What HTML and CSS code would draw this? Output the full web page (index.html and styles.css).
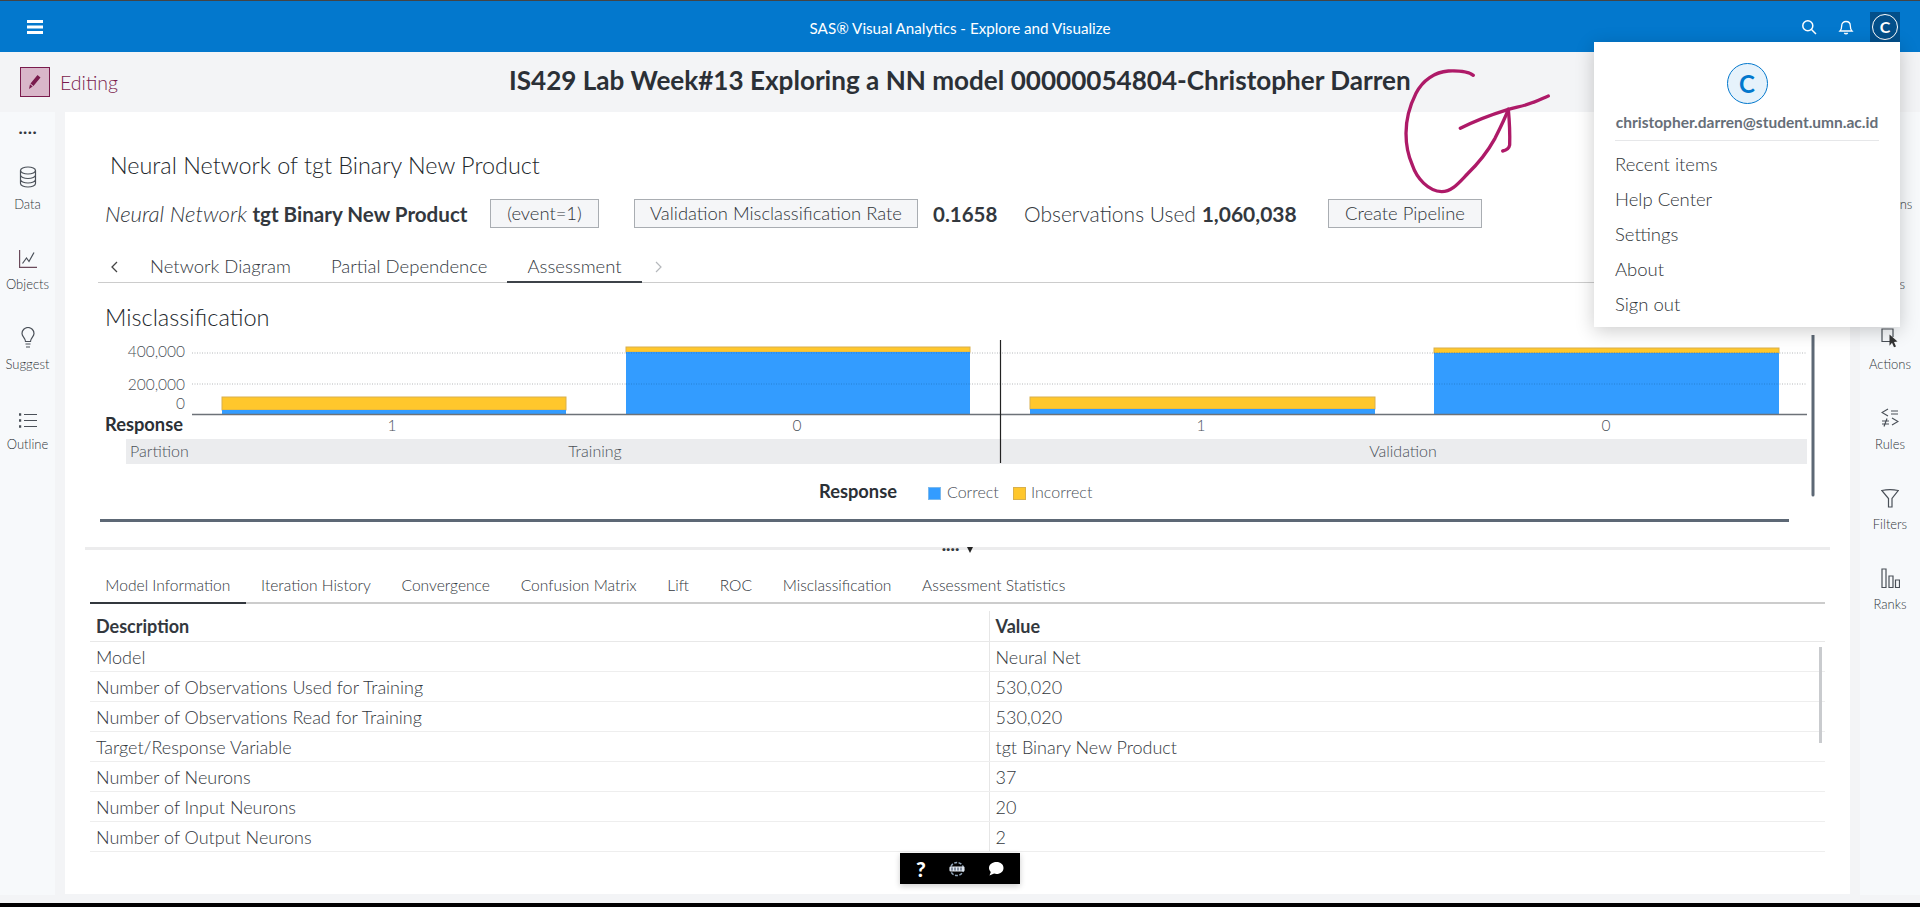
FILE: index.html
```html
<!DOCTYPE html>
<html lang="en">
<head>
<meta charset="utf-8">
<title>SAS Visual Analytics</title>
<link rel="stylesheet" href="styles.css">
</head>
<body>
<header class="topbar">
  <svg class="hamburger" width="16" height="14" viewBox="0 0 16 14"><path d="M0 0h16v3H0zM0 5.500h16v3H0zM0 11h16v3H0z" fill="#fff"/></svg>
  <div class="app-name">SAS® Visual Analytics - Explore and Visualize</div>
  <div class="top-actions">
    <svg class="top-icon" width="16" height="16" viewBox="0 0 16 16" fill="none" stroke="#fff" stroke-width="1.500"><circle cx="6.800" cy="6.800" r="5"/><path d="M10.500 10.500L15 15"/></svg>
    <svg class="top-icon" width="16" height="16" viewBox="0 0 16 16" fill="none" stroke="#fff" stroke-width="1.300"><path d="M2 12c1.500-1.500 1.700-3 1.700-5.200C3.700 4.300 5.500 2.500 8 2.500s4.300 1.800 4.300 4.300c0 2.200.2 3.700 1.700 5.200z"/><path d="M6.200 14.200c1.100.8 2.500.8 3.600 0" stroke-width="1.500"/></svg>
    <div class="user-btn"><span class="user-ring">C</span></div>
  </div>
</header>

<section class="subbar">
  <div class="edit-box">
    <svg width="14" height="16" viewBox="0 0 14 16"><path d="M9.500 1l3 2.400-7 8.500-3-2.400zM2 10.300l2.700 2.100L1 15z" fill="#7a1b4d"/></svg>
  </div>
  <span class="edit-label">Editing</span>
  <h1 class="doc-title">IS429 Lab Week#13 Exploring a NN model 00000054804-Christopher Darren</h1>
</section>

<div class="workspace">
  <nav class="rail">
    <div class="rail-dots">····</div>
    <div class="rail-item">
      <svg class="rail-icon" width="18" height="22" viewBox="0 0 18 22" fill="none" stroke="#4a5058" stroke-width="1.200"><ellipse cx="9" cy="4.500" rx="7.500" ry="3.500"/><path d="M1.500 4.500v13c0 1.900 3.400 3.500 7.500 3.500s7.500-1.600 7.500-3.500v-13M1.500 9c0 1.900 3.400 3.500 7.500 3.500s7.500-1.600 7.500-3.500M1.500 13.500c0 1.900 3.400 3.500 7.500 3.500s7.500-1.600 7.500-3.500"/></svg>
      <span>Data</span>
    </div>
    <div class="rail-item">
      <svg class="rail-icon" width="18" height="18" viewBox="0 0 18 18" fill="none" stroke="#4a5058" stroke-width="1.200"><path d="M.6 0v17.400H18" stroke="#6a4a5a"/><path d="M3.500 13.500l4-5.500 2.500 3.500L15 2.500"/></svg>
      <span>Objects</span>
    </div>
    <div class="rail-item">
      <svg class="rail-icon" width="14" height="21" viewBox="0 0 14 21" fill="none" stroke="#4a5058" stroke-width="1.200"><path d="M4.500 14.500C4.500 11 1 9.800 1 6.500a6 6 0 0112 0c0 3.300-3.500 4.500-3.500 8z"/><path d="M4.500 17h5M5 20h4"/></svg>
      <span>Suggest</span>
    </div>
    <div class="rail-item">
      <svg class="rail-icon" width="18" height="15" viewBox="0 0 18 15" fill="none" stroke="#4a5058" stroke-width="1.200"><path d="M5 1.500h13M5 7.500h13M5 13.500h13"/><path d="M0 1.500h2.200M0 7.500h2.200M0 13.500h2.200" stroke-width="2.400"/></svg>
      <span>Outline</span>
    </div>
  </nav>

  <main class="canvas">
    <h2 class="model-title">Neural Network of tgt Binary New Product</h2>
    <div class="summary">
      <span class="summary-name"><i>Neural Network</i> <b>tgt Binary New Product</b></span>
      <span class="chip chip-event">(event=1)</span>
      <span class="chip chip-metric">Validation Misclassification Rate</span>
      <b class="summary-value">0.1658</b>
      <span class="summary-obs">Observations Used <b>1,060,038</b></span>
      <span class="chip chip-pipeline">Create Pipeline</span>
    </div>
    <div class="tabs">
      <svg class="tab-chevron" width="8" height="12" viewBox="0 0 8 12" fill="none" stroke="#444" stroke-width="1.300"><path d="M7 1L2 6l5 5"/></svg>
      <span class="tab">Network Diagram</span>
      <span class="tab">Partial Dependence</span>
      <span class="tab tab-active">Assessment</span>
      <svg class="tab-chevron-next" width="8" height="12" viewBox="0 0 8 12" fill="none" stroke="#b5b8bc" stroke-width="1.200"><path d="M1 1l5 5-5 5"/></svg>
    </div>
    <h3 class="chart-title">Misclassification</h3>
    <svg class="chart" width="1716" height="190" viewBox="0 0 1716 190">
      <rect x="26" y="104" width="1681" height="25" fill="#ebecee"/>
      <g stroke="#b5b8bb" stroke-dasharray="1 1.500"><path d="M92 18H1707M92 49H1707"/></g>
      <rect x="122" y="62" width="344" height="13" fill="#ffc72c" stroke="#d9b04c"/>
      <rect x="122" y="75" width="344" height="4" fill="#339cff"/>
      <rect x="526" y="12" width="344" height="5" fill="#ffc72c" stroke="#d9b04c"/>
      <rect x="526" y="17" width="344" height="62" fill="#339cff"/>
      <rect x="930" y="62" width="345" height="12" fill="#ffc72c" stroke="#d9b04c"/>
      <rect x="930" y="74" width="345" height="5" fill="#339cff"/>
      <rect x="1334" y="13" width="345" height="5" fill="#ffc72c" stroke="#d9b04c"/>
      <rect x="1334" y="18" width="345" height="61" fill="#339cff"/>
      <g stroke="#1f6fb8" stroke-dasharray="1 1.500" opacity=".6"><path d="M526 18H870M526 49H870M1334 18H1679M1334 49H1679"/></g>
      <path d="M92 79.500H1707" stroke="#6d7278" stroke-width="1.500"/>
      <path d="M900.500 5V128" stroke="#222" stroke-width="1.200"/>
      <g class="tick" text-anchor="end"><text x="85" y="22">400,000</text><text x="85" y="55">200,000</text><text x="85" y="74">0</text></g>
      <text class="resp" x="5" y="96">Response</text>
      <g class="tick" text-anchor="middle"><text x="292" y="96">1</text><text x="697" y="96">0</text><text x="1101" y="96">1</text><text x="1506" y="96">0</text></g>
      <text class="band" x="30" y="122">Partition</text>
      <text class="band" x="495" y="122" text-anchor="middle">Training</text>
      <text class="band" x="1303" y="122" text-anchor="middle">Validation</text>
      <text class="resp" x="719" y="163">Response</text>
      <rect x="828.500" y="152.500" width="12" height="12" fill="#339cff" stroke="#7ab9ee"/>
      <text class="band" x="847" y="163">Correct</text>
      <rect x="913.500" y="152.500" width="12" height="12" fill="#ffc72c" stroke="#d9b04c"/>
      <text class="band" x="931" y="163">Incorrect</text>
      <path d="M0 185.500H1689" stroke="#5d6875" stroke-width="3"/>
      <path d="M1713 0V160" stroke="#5d6875" stroke-width="3" stroke-linecap="round"/>
    </svg>
    <div class="splitter">
      <span class="split-dots">····</span>
      <svg width="6" height="6" viewBox="0 0 6 6"><path d="M0 0h6L3 6z" fill="#222"/></svg>
    </div>
    <div class="subtabs">
      <span class="subtab subtab-active">Model Information</span>
      <span class="subtab">Iteration History</span>
      <span class="subtab">Convergence</span>
      <span class="subtab">Confusion Matrix</span>
      <span class="subtab">Lift</span>
      <span class="subtab">ROC</span>
      <span class="subtab">Misclassification</span>
      <span class="subtab">Assessment Statistics</span>
    </div>
    <table class="info">
      <thead><tr><th>Description</th><th>Value</th></tr></thead>
      <tbody>
        <tr><td>Model</td><td>Neural Net</td></tr>
        <tr><td>Number of Observations Used for Training</td><td>530,020</td></tr>
        <tr><td>Number of Observations Read for Training</td><td>530,020</td></tr>
        <tr><td>Target/Response Variable</td><td>tgt Binary New Product</td></tr>
        <tr><td>Number of Neurons</td><td>37</td></tr>
        <tr><td>Number of Input Neurons</td><td>20</td></tr>
        <tr><td>Number of Output Neurons</td><td>2</td></tr>
      </tbody>
    </table>
  </main>

  <nav class="rail rail-right">
    <div class="rail-item"><svg class="rail-icon" width="18" height="18" viewBox="0 0 18 18" fill="none" stroke="#4a5058" stroke-width="1.200"><path d="M2 3h14v9H2z"/></svg><span>Options</span></div>
    <div class="rail-item"><svg class="rail-icon" width="18" height="18" viewBox="0 0 18 18" fill="none" stroke="#4a5058" stroke-width="1.200"><path d="M2 3h14v12H2z"/></svg><span>Roles</span></div>
    <div class="rail-item">
      <svg class="rail-icon" width="18" height="20" viewBox="0 0 18 20"><path d="M10 13.500H1V1h11v8" fill="none" stroke="#4a5058" stroke-width="1.200"/><path d="M8.500 6.500l8 7-3.500.5 2 4.500-2 .8-2-4.500-2.500 3z" fill="#333"/></svg>
      <span>Actions</span>
    </div>
    <div class="rail-item">
      <svg class="rail-icon" width="18" height="20" viewBox="0 0 18 20" fill="none" stroke="#4a5058" stroke-width="1.200"><path d="M7 1L1 4.500 7 8M10 3h7M10 6h7M1 13h7M1 16h7M6 10.500l-3 8M11 10l6 3.500-6 3.500"/></svg>
      <span>Rules</span>
    </div>
    <div class="rail-item">
      <svg class="rail-icon" width="18" height="19" viewBox="0 0 18 19" fill="none" stroke="#4a5058" stroke-width="1.200"><path d="M.8 1.500C5 .7 13 .7 17.200 1.500L11 9.500V18H7.500V9.500z"/></svg>
      <span>Filters</span>
    </div>
    <div class="rail-item">
      <svg class="rail-icon" width="19" height="20" viewBox="0 0 19 20" fill="none" stroke="#4a5058" stroke-width="1.200"><path d="M1 1h4v18.500H1zM8 8h4v11.500H8zM14.500 12h4v7.500h-4z"/></svg>
      <span>Ranks</span>
    </div>
  </nav>
</div>
<div class="screen-edge"></div>

<aside class="user-menu">
  <div class="menu-avatar">C</div>
  <div class="menu-email">christopher.darren@student.umn.ac.id</div>
  <ul class="menu-list">
    <li>Recent items</li>
    <li>Help Center</li>
    <li>Settings</li>
    <li>About</li>
    <li>Sign out</li>
  </ul>
</aside>

<div class="scroll-thumb"></div>

<div class="float-bar">
  <span class="float-q">?</span>
  <svg width="18" height="18" viewBox="0 0 18 18"><circle cx="9" cy="9" r="6.500" fill="none" stroke="#8fa3b8" stroke-width="1.500" stroke-dasharray="3 1.500"/><rect x="1.500" y="6.500" width="15" height="5" rx="1" fill="#dfe6ee"/><path d="M4 7.500v3M7 7.500v3M10 7.500v3M13 7.500v3" stroke="#2a3a55"/></svg>
  <svg width="16" height="16" viewBox="0 0 16 16"><path d="M8.500 1C12.600 1 15.500 3.500 15.500 7s-3 6-7 6c-.9 0-1.700-.1-2.400-.4L1.500 14.500l1.300-3.500C1.600 9.800 1 8.500 1 7c0-3.500 3.400-6 7.500-6z" fill="#fff"/></svg>
</div>

<svg class="ink" width="240" height="160" viewBox="0 0 720 480" fill="none" stroke="#ae1a68" stroke-width="10" stroke-linecap="round" stroke-linejoin="round">
  <path d="M280 76C262 62 235 62 205 63C165 66 128 90 108 130C88 170 78 215 78 250C78 290 88 325 97 345C110 385 145 423 185 425C215 425 235 400 262 372C295 340 320 310 345 265C360 235 375 205 385 178"/>
  <path d="M385 178C388 210 390 250 389 285C387 296 378 301 368 303"/>
  <path d="M241 235C285 212 340 192 385 178C415 170 440 166 460 157C480 150 492 143 505 138"/>
</svg>
</body>
</html>
```
FILE: styles.css
```css
* { box-sizing: border-box; }
html, body { margin: 0; height: 907px; overflow: hidden; }
body {
  display: flex;
  flex-direction: column;
  font-family: "Lato", "Liberation Sans", sans-serif;
  color: #33383e;
  background: #f3f4f6;
  position: relative;
}
.topbar {
  height: 52px;
  flex: none;
  background: #0378cd;
  border-top: 1px solid #444;
  display: flex;
  align-items: center;
  padding-left: 27px;
  position: relative;
}
.app-name {
  position: absolute;
  left: 0;
  right: 0;
  top: 18px;
  text-align: center;
  color: #fff;
  font-size: 15.2px;
  line-height: 18px;
}
.top-actions {
  margin-left: auto;
  margin-right: 20px;
  display: flex;
  align-items: flex-start;
  align-self: flex-start;
  height: 41px;
}
.top-icon { margin-top: 18px; margin-right: 21px; }
.user-btn {
  width: 30px;
  height: 40px;
  margin-top: 11px;
  background: #034f8a;
  display: flex;
  justify-content: center;
  padding-top: 2px;
  margin-left: -5px;
}
.user-ring {
  width: 26px;
  height: 26px;
  border: 1px solid #fff;
  border-radius: 50%;
  color: #fff;
  font-size: 16px;
  font-weight: 700;
  line-height: 24px;
  text-align: center;
}
.subbar {
  height: 60px;
  flex: none;
  position: relative;
  display: flex;
  align-items: center;
  padding-left: 20px;
}
.edit-box {
  width: 30px;
  height: 30px;
  background: #d9b6c9;
  border: 1px solid #7a1b4d;
  display: flex;
  align-items: center;
  justify-content: center;
}
.edit-label { margin-left: 10px; font-size: 19.5px; font-weight: 300; color: #7a1b4d; }
.doc-title {
  position: absolute;
  left: 509px;
  top: 13px;
  margin: 0;
  font-size: 26.1px;
  font-weight: 700;
  line-height: 30px;
  color: #2b3036;
  white-space: nowrap;
}
.workspace { flex: 1; display: flex; min-height: 0; }
.rail {
  width: 55px;
  flex: none;
  background: #f7f9fb;
  display: flex;
  flex-direction: column;
  align-items: center;
}
.rail-right { width: 60px; margin-left: 10px; padding-top: 32px; }
.rail-dots {
  height: 38px;
  font-size: 18px;
  font-weight: 400;
  line-height: 38px;
  color: #33383e;
}
.rail-item {
  height: 80px;
  width: 100%;
  display: flex;
  flex-direction: column;
  align-items: center;
  justify-content: flex-end;
  font-size: 13px;
  font-weight: 300;
  line-height: 16px;
  color: #2f3439;
  flex: none;
}
.rail-item span { margin-top: 8px; margin-bottom: 12px; white-space: nowrap; }
.rail > .rail-dots + .rail-item { height: 74px; }
.canvas {
  margin-left: 10px;
  width: 1785px;
  flex: none;
  background: #fff;
  height: 782px;
  overflow: hidden;
  display: flex;
  flex-direction: column;
}
.model-title {
  margin: 38px 0 0 45px;
  font-size: 23.4px;
  font-weight: 300;
  line-height: 30px;
  color: #22272c;
}
.summary {
  margin: 19px 0 0 40px;
  height: 29px;
  display: flex;
  align-items: center;
  font-size: 21px;
  white-space: nowrap;
}
.summary-name { width: 361px; flex: none; }
.summary-name i { font-weight: 300; font-size: 22.2px; }
.summary-name b { font-size: 20.6px; }
.chip {
  height: 29px;
  border: 1px solid #a9adb2;
  background: #f5f6f8;
  font-size: 18.4px;
  font-weight: 300;
  line-height: 27px;
  text-align: center;
  color: #2f3439;
  flex: none;
}
.chip-event { width: 109px; margin-left: 24px; }
.chip-metric { width: 284px; margin-left: 35px; }
.summary-value { margin-left: 15px; width: 91px; font-size: 20.5px; }
.summary-obs { width: 304px; font-weight: 300; }
.summary-obs b { font-weight: 700; }
.chip-pipeline { width: 154px; }
.tabs {
  margin: 21px 12px 0 33px;
  height: 34px;
  border-bottom: 1px solid #ccc;
  display: flex;
  align-items: stretch;
  padding-left: 12px;
  font-size: 18.5px;
  font-weight: 300;
}
.tab-chevron { margin: 12px 12px 0 0; }
.tab-chevron-next { margin: 12px 0 0 13px; }
.tab { padding: 0 20px; line-height: 34px; margin-bottom: -1px; white-space: nowrap; }
.tab-active { border-bottom: 2px solid #3d4349; }
.chart-title {
  margin: 19px 0 0 40px;
  font-size: 23.6px;
  font-weight: 300;
  line-height: 30px;
  color: #22272c;
}
.chart { display: block; margin: 3px 0 0 35px; flex: none; }
.chart text { font-family: "Lato", "Liberation Sans", sans-serif; }
.chart .tick text { font-size: 15.5px; font-weight: 300; fill: #4a5058; }
.chart .resp { font-size: 18.3px; font-weight: 700; fill: #2b3036; }
.chart .band { font-size: 16px; font-weight: 300; fill: #4a5058; }
.splitter {
  margin: 22px 20px 0 20px;
  height: 3px;
  background: #ececed;
  display: flex;
  justify-content: center;
  align-items: flex-start;
  gap: 8px;
  flex: none;
}
.split-dots {
  height: 3px;
  font-size: 16px;
  font-weight: 700;
  line-height: 0;
  color: #33383e;
  margin-top: 1px;
}
.subtabs {
  margin: 20px 25px 0 25px;
  height: 34px;
  border-bottom: 2px solid #ccc;
  display: flex;
  font-size: 15.6px;
  font-weight: 300;
  flex: none;
}
.subtab { padding: 0 15.35px; line-height: 30px; white-space: nowrap; height: 34px; }
.subtab-active { border-bottom: 2px solid #33383e; }
.info {
  margin: 7px 25px 0 25px;
  width: 1735px;
  border-collapse: collapse;
  table-layout: fixed;
  font-size: 18px;
  font-weight: 300;
  flex: none;
}
.info th {
  height: 30px;
  text-align: left;
  padding: 1px 0 0 6px;
  font-weight: 700;
  color: #33383e;
  border-bottom: 1px solid #e8e8e8;
}
.info td {
  height: 30px;
  padding: 1px 0 0 6px;
  border-bottom: 1px solid #eee;
  color: #33383e;
}
.info th:first-child, .info td:first-child { width: 899px; border-right: 1px solid #e6e6e6; }
.screen-edge { height: 4px; background: #000; flex: none; margin-top: 8px; }
.user-menu {
  position: absolute;
  left: 1594px;
  top: 42px;
  width: 306px;
  height: 285px;
  background: #fff;
  box-shadow: 0 4px 18px rgba(0, 0, 0, .2);
  padding: 21px 21px 0;
  display: flex;
  flex-direction: column;
  align-items: center;
}
.menu-avatar {
  width: 41px;
  height: 41px;
  flex: none;
  border-radius: 50%;
  border: 1px solid #0378cd;
  background: #e6f2fb;
  color: #0378cd;
  font-size: 24px;
  font-weight: 700;
  line-height: 39px;
  text-align: center;
}
.menu-email {
  margin-top: 5px;
  width: 100%;
  height: 32px;
  font-size: 15.5px;
  font-weight: 700;
  line-height: 26px;
  text-align: center;
  white-space: nowrap;
  color: #666e78;
  border-bottom: 1px solid #e6e7e9;
}
.menu-list {
  list-style: none;
  margin: 6px 0 0;
  padding: 0;
  width: 100%;
  font-size: 18.5px;
  font-weight: 300;
}
.menu-list li { height: 35px; line-height: 35px; color: #2f3439; }
.scroll-thumb {
  position: absolute;
  left: 1819px;
  top: 647px;
  width: 3px;
  height: 96px;
  background: #c9cbce;
}
.float-bar {
  position: absolute;
  left: 900px;
  top: 853px;
  width: 120px;
  height: 31px;
  background: #000;
  box-shadow: 0 2px 6px rgba(0, 0, 0, .2);
  display: flex;
  align-items: center;
  gap: 22px;
  padding-left: 16px;
}
.float-q { color: #fff; font-size: 21px; font-weight: 900; line-height: 20px; }
.ink { position: absolute; left: 1380px; top: 50px; }
```
